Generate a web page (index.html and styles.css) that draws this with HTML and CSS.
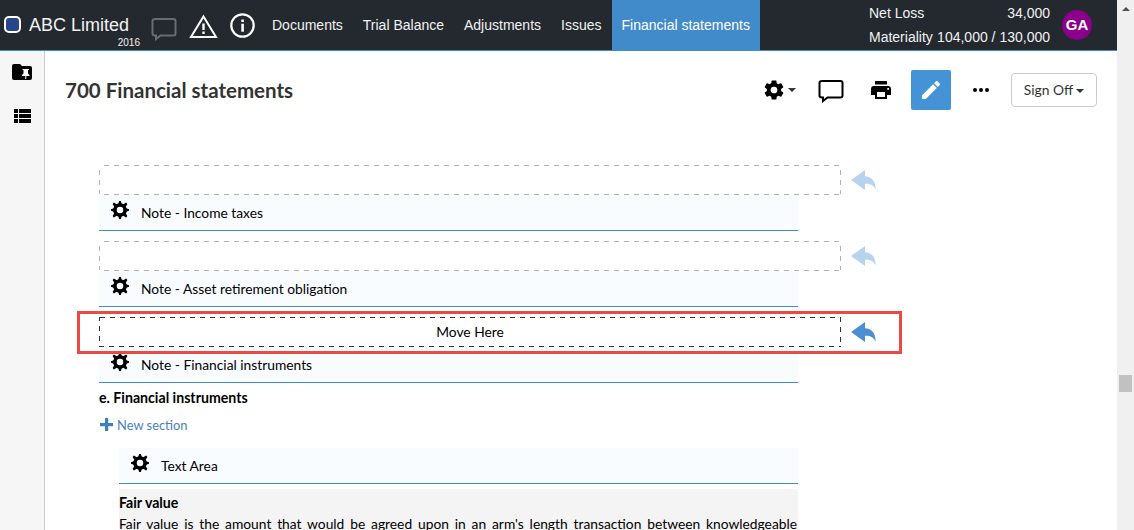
FILE: index.html
```html
<!DOCTYPE html>
<html lang="en">
<head>
<meta charset="utf-8">
<title>700 Financial statements</title>
<link rel="stylesheet" href="styles.css">
</head>
<body>
<svg class="defs" width="0" height="0">
  <symbol id="gear" viewBox="0 0 24 24"><path fill-rule="evenodd" d="M19.4 13a7.500 7.500 0 0 0 0-2l2.100-1.650a.5.5 0 0 0 .12-.64l-2-3.460a.5.5 0 0 0-.61-.22l-2.490 1a7.300 7.300 0 0 0-1.690-.98l-.38-2.650A.49.49 0 0 0 14 2h-4a.49.49 0 0 0-.49.420l-.38 2.650c-.61.25-1.170.59-1.690.98l-2.490-1a.49.49 0 0 0-.61.22l-2 3.460a.5.5 0 0 0 .12.640L4.570 11a7.900 7.900 0 0 0 0 2l-2.110 1.650a.5.5 0 0 0-.12.640l2 3.460c.12.22.39.3.61.220l2.490-1c.52.4 1.080.73 1.690.98l.38 2.650c.03.24.24.4.49.4h4c.25 0 .46-.18.49-.42l.38-2.650c.61-.25 1.170-.59 1.690-.98l2.490 1c.23.09.49 0 .61-.22l2-3.460a.5.5 0 0 0-.12-.64zM12 15.500a3.500 3.500 0 1 1 0-7 3.500 3.500 0 0 1 0 7z"/></symbol>
  <symbol id="cog" viewBox="0 0 18 18"><circle cx="9" cy="9" r="5.050" fill="none" stroke="#000" stroke-width="3.600"/><path d="M7 3.500 8.200 0h1.600L11 3.500zM7 14.500 8.200 18h1.600l1.200-3.500zM3.500 7 0 8.200v1.600L3.500 11zM14.500 7 18 8.200v1.600L14.500 11zM3.700 6.500 1.600 2.900 2.900 1.600l3.600 2.100zM14.300 6.500l2.100-3.600-1.300-1.300-3.600 2.100zM3.700 11.500l-2.100 3.600 1.300 1.300 3.600-2.100zM14.300 11.500l2.100 3.600-1.300 1.300-3.600-2.100z"/></symbol>
  <symbol id="reply" viewBox="0 0 25 20"><path d="M0 10 14 0v6.300c6.500.2 10.400 4.500 10.800 13.200C22.700 15.400 19.500 13.500 14 13.700V20z"/></symbol>
  <symbol id="bubble" viewBox="0 0 26 24"><path fill="none" stroke="currentColor" stroke-width="2" stroke-linejoin="miter" d="M4 2h18.500q2 0 2 2v12.500q0 2-2 2H9.500L5 22v-3.500H4q-2.500 0-2.500-2V4q0-2 2.500-2z"/></symbol>
</svg>

<div class="window">
  <div class="app">
    <header class="topbar">
      <div class="brand">
        <span class="logo"></span>
        <span class="entity"><span class="entity-name">ABC Limited</span><span class="year">2016</span></span>
      </div>
      <div class="status-icons">
        <svg class="top-bubble" viewBox="0 0 26 24"><use href="#bubble"/></svg>
        <svg class="warn" viewBox="0 0 29 25"><path fill="none" stroke="#fff" stroke-width="2" d="M14.500 2.500 27 23H2z"/><path fill="#fff" d="M13.300 9.500h2.400v6.500h-2.400zM13.300 17.500h2.400v2.500h-2.400z"/></svg>
        <svg class="info" viewBox="0 0 25 25"><circle cx="12.500" cy="12.500" r="11.200" fill="none" stroke="#fff" stroke-width="2.200"/><path fill="#fff" d="M11.300 6.500h2.600v2.400h-2.600zM11.300 10.700h2.600v8h-2.600z"/></svg>
      </div>
      <nav class="nav">
        <a>Documents</a><a>Trial Balance</a><a>Adjustments</a><a>Issues</a><a class="active">Financial statements</a>
      </nav>
      <div class="figures">
        <div><span>Net Loss</span><span>34,000</span></div>
        <div><span>Materiality</span><span>104,000 / 130,000</span></div>
      </div>
      <div class="avatar">GA</div>
    </header>

    <div class="body">
      <aside class="rail">
        <svg width="20" height="16" viewBox="0 0 20 16"><path d="M2 0h6l2 2h8q2 0 2 2v10q0 2-2 2H2q-2 0-2-2V2q0-2 2-2z"/><path fill="#fff" d="M10.500 5h6.500v1h-1v3.500l1.500 1.500v1h-3.200v3h-1v-3H10v-1l1.500-1.500V6h-1z"/></svg>
        <svg width="17" height="14" viewBox="0 0 17 14"><path d="M0 0h4v4H0zM5 0h12v4H5zM0 5h4v4H0zM5 5h12v4H5zM0 10h4v4H0zM5 10h12v4H5z"/></svg>
      </aside>

      <main class="main">
        <div class="toolbar">
          <h1>700 Financial statements</h1>
          <svg class="tool-gear"><use href="#gear"/></svg>
          <span class="caret"></span>
          <svg class="tool-bubble"><use href="#bubble"/></svg>
          <svg class="print" viewBox="0 0 20 18"><path fill-rule="evenodd" d="M4 0h12v3.500H4zM3 5h14q3 0 3 3v6h-4v4H4v-4H0V8q0-3 3-3zm3 6v5h8v-5zM16.300 7v1.800H18V7z"/></svg>
          <span class="edit"><svg width="18" height="18" viewBox="0 0 18 18"><path fill="#fff" d="M0 14.200V18h3.800L14.800 6.900 11.100 3.200zM17.700 4c.4-.4.4-1 0-1.400L15.400.3c-.4-.4-1-.4-1.400 0l-1.900 1.900 3.700 3.700z"/></svg></span>
          <svg class="more" viewBox="0 0 16 4"><circle cx="2" cy="2" r="2"/><circle cx="8" cy="2" r="2"/><circle cx="14" cy="2" r="2"/></svg>
          <span class="signoff">Sign Off<span class="caret"></span></span>
        </div>

        <div class="doc">
          <section class="note">
            <div class="drop">
              <div class="slot"><svg class="dashes" viewBox="0 0 742 30"><path d="M5 .5H741M5 29.500H741M.5 5V29M741.500 5V29"/></svg></div>
              <svg class="reply"><use href="#reply"/></svg>
            </div>
            <div class="bar"><svg class="cog"><use href="#cog"/></svg><span>Note - Income taxes</span></div>
          </section>
          <section class="note">
            <div class="drop">
              <div class="slot"><svg class="dashes" viewBox="0 0 742 30"><path d="M5 .5H741M5 29.500H741M.5 5V29M741.500 5V29"/></svg></div>
              <svg class="reply"><use href="#reply"/></svg>
            </div>
            <div class="bar"><svg class="cog"><use href="#cog"/></svg><span>Note - Asset retirement obligation</span></div>
          </section>
          <section class="note target">
            <div class="drop">
              <div class="slot"><svg class="dashes" viewBox="0 0 742 30"><path d="M1 .5H741M0 29.500H742M.5 -1V29M741.500 0V29"/></svg><span>Move Here</span></div>
              <svg class="reply"><use href="#reply"/></svg>
            </div>
            <div class="bar"><svg class="cog"><use href="#cog"/></svg><span>Note - Financial instruments</span></div>
            <div class="highlight"></div>
          </section>

          <h2>e. Financial instruments</h2>
          <div class="new"><svg width="13" height="13" viewBox="0 0 13 13"><path d="M5 0h3.200v5H13v3.200H8.200V13H5V8.200H0V5h5z"/></svg><span>New section</span></div>

          <div class="nested">
            <div class="bar"><svg class="cog"><use href="#cog"/></svg><span>Text Area</span></div>
            <div class="text">
              <h3>Fair value</h3>
              <p>Fair value is the amount that would be agreed upon in an arm's length transaction between knowledgeable</p>
            </div>
          </div>
        </div>
      </main>
    </div>
  </div>
  <div class="scrollbar"><span class="arrow"></span><span class="thumb"></span></div>
</div>
</body>
</html>
```
FILE: styles.css
```css
* { box-sizing: border-box; }
body { margin: 0; background: #fff; color: #000; font-family: Lato, sans-serif; }
svg { display: block; flex: none; }
h1, h2, h3, p { margin: 0; }
.defs { position: absolute; }
.window { display: flex; width: 1134px; height: 530px; overflow: hidden; }
.app { width: 1117px; height: 530px; overflow: hidden; display: flex; flex-direction: column; }

.topbar { flex: none; display: flex; height: 51px; background: #23292f; border-bottom: 1px solid #428bca; color: #f2f2f2; font: 14px "Liberation Sans", Arial, sans-serif; }
.brand { display: flex; width: 151px; padding: 16px 0 0 4px; }
.logo { width: 17px; height: 17px; border: 2px solid #fff; border-radius: 5px; background: #27468a; }
.entity { display: flex; flex-direction: column; width: 111px; margin: -2px 0 0 8px; white-space: nowrap; }
.entity-name { font-size: 18px; line-height: 22px; }
.year { font-size: 10px; line-height: 14px; text-align: right; }
.status-icons { display: flex; width: 106px; }
.top-bubble { width: 26px; height: 24px; margin-top: 17px; color: #696d70; }
.warn { width: 29px; height: 25px; margin: 14px 0 0 12px; }
.info { width: 25px; height: 25px; margin: 13px 0 0 12px; }
.nav { display: flex; width: 503px; }
.nav a { height: 50px; line-height: 50px; padding: 0 10px; white-space: nowrap; }
.nav a:first-child { padding-left: 15px; }
.nav .active { margin-left: auto; width: 148px; padding: 0 0 0 9.500px; background: #428bca; color: #fff; }
.figures { width: 181px; margin-left: 109px; padding-top: 1px; line-height: 24px; }
.figures div { display: flex; justify-content: space-between; white-space: nowrap; }
.avatar { width: 30px; height: 30px; margin: 10px 0 0 12px; border-radius: 50%; background: #8b008b; color: #fff; font-size: 15px; font-weight: bold; line-height: 30px; text-align: center; }

.body { display: flex; flex: 1; min-height: 0; }
.rail { flex: none; display: flex; flex-direction: column; align-items: center; gap: 29px; width: 45px; padding-top: 13px; background: #f6f6f6; border-right: 1px solid #ccc; }
.main { flex: 1; }
.toolbar { display: flex; align-items: center; height: 78px; padding-left: 20px; }
h1 { width: 699px; font-size: 20.500px; font-weight: 700; line-height: 24px; color: #333; }
.tool-gear { width: 20px; height: 20px; transform: scale(1.150); }
.caret { margin-left: 4px; border: 4px solid transparent; border-top-color: #333; border-bottom: 0; }
.tool-bubble { width: 26px; height: 24px; margin: 2px 0 0 22px; }
.print { width: 20px; height: 18px; margin-left: 27px; }
.edit { display: flex; align-items: center; justify-content: center; width: 40px; height: 40px; margin-left: 20px; border-radius: 2px; background: #4393d6; }
.more { width: 16px; height: 4px; margin-left: 22px; }
.signoff { display: flex; align-items: center; justify-content: center; width: 86px; height: 34px; margin-left: 22px; padding-bottom: 1px; border: 1px solid #ccc; border-radius: 4px; color: #333; font-size: 13.800px; }
.signoff .caret { margin: 2px 0 0 3px; }

.doc { padding: 36px 0 0 54px; font-size: 13.800px; }
.note { position: relative; margin-bottom: 10px; }
.drop { display: flex; }
.slot { position: relative; width: 742px; height: 30px; line-height: 30px; text-align: center; }
.dashes { position: absolute; left: 0; top: 0; width: 742px; height: 30px; fill: none; stroke: #b1b1b1; stroke-width: 1; stroke-dasharray: 5 5; }
.target .dashes { stroke: #333; }
.reply { width: 25px; height: 20px; margin: 5px 0 0 10px; fill: #b8d3ee; }
.target .reply { fill: #4b8ed1; }
.bar { display: flex; width: 699px; height: 36px; padding: 6px 0 0 12px; background: #f8fcff; border-bottom: 1px solid #428bca; }
.cog { width: 18px; height: 18px; }
.bar span { margin: 3px 0 0 12px; line-height: 17px; }
.highlight { position: absolute; left: -22px; top: -6px; width: 825px; height: 43px; border: 3px solid #eb4a44; }
h2 { margin-top: -5px; font-size: 14.150px; font-weight: 700; line-height: 20px; }
.new { display: flex; align-items: center; gap: 4px; height: 17px; margin-top: 8px; padding-left: 1px; color: #4a82ba; fill: #3d80bc; font-size: 12.900px; }
.nested { margin: 15px 0 0 20px; }
.nested .bar { width: 679px; }
.text { width: 679px; height: 60px; margin-top: 5px; padding-top: 4px; background: #f4f4f4; }
h3 { font-size: 14.150px; line-height: 20px; font-weight: 700; }
.text p { width: 678px; line-height: 22px; text-align: justify; text-align-last: justify; }

.scrollbar { display: flex; flex-direction: column; align-items: center; width: 17px; height: 530px; background: #f0f0f0; }
.arrow { margin-top: 7px; border: 4px solid transparent; border-bottom-color: #505050; border-top: 0; }
.thumb { width: 13px; height: 17px; margin-top: 364px; background: #c1c1c1; }
```
